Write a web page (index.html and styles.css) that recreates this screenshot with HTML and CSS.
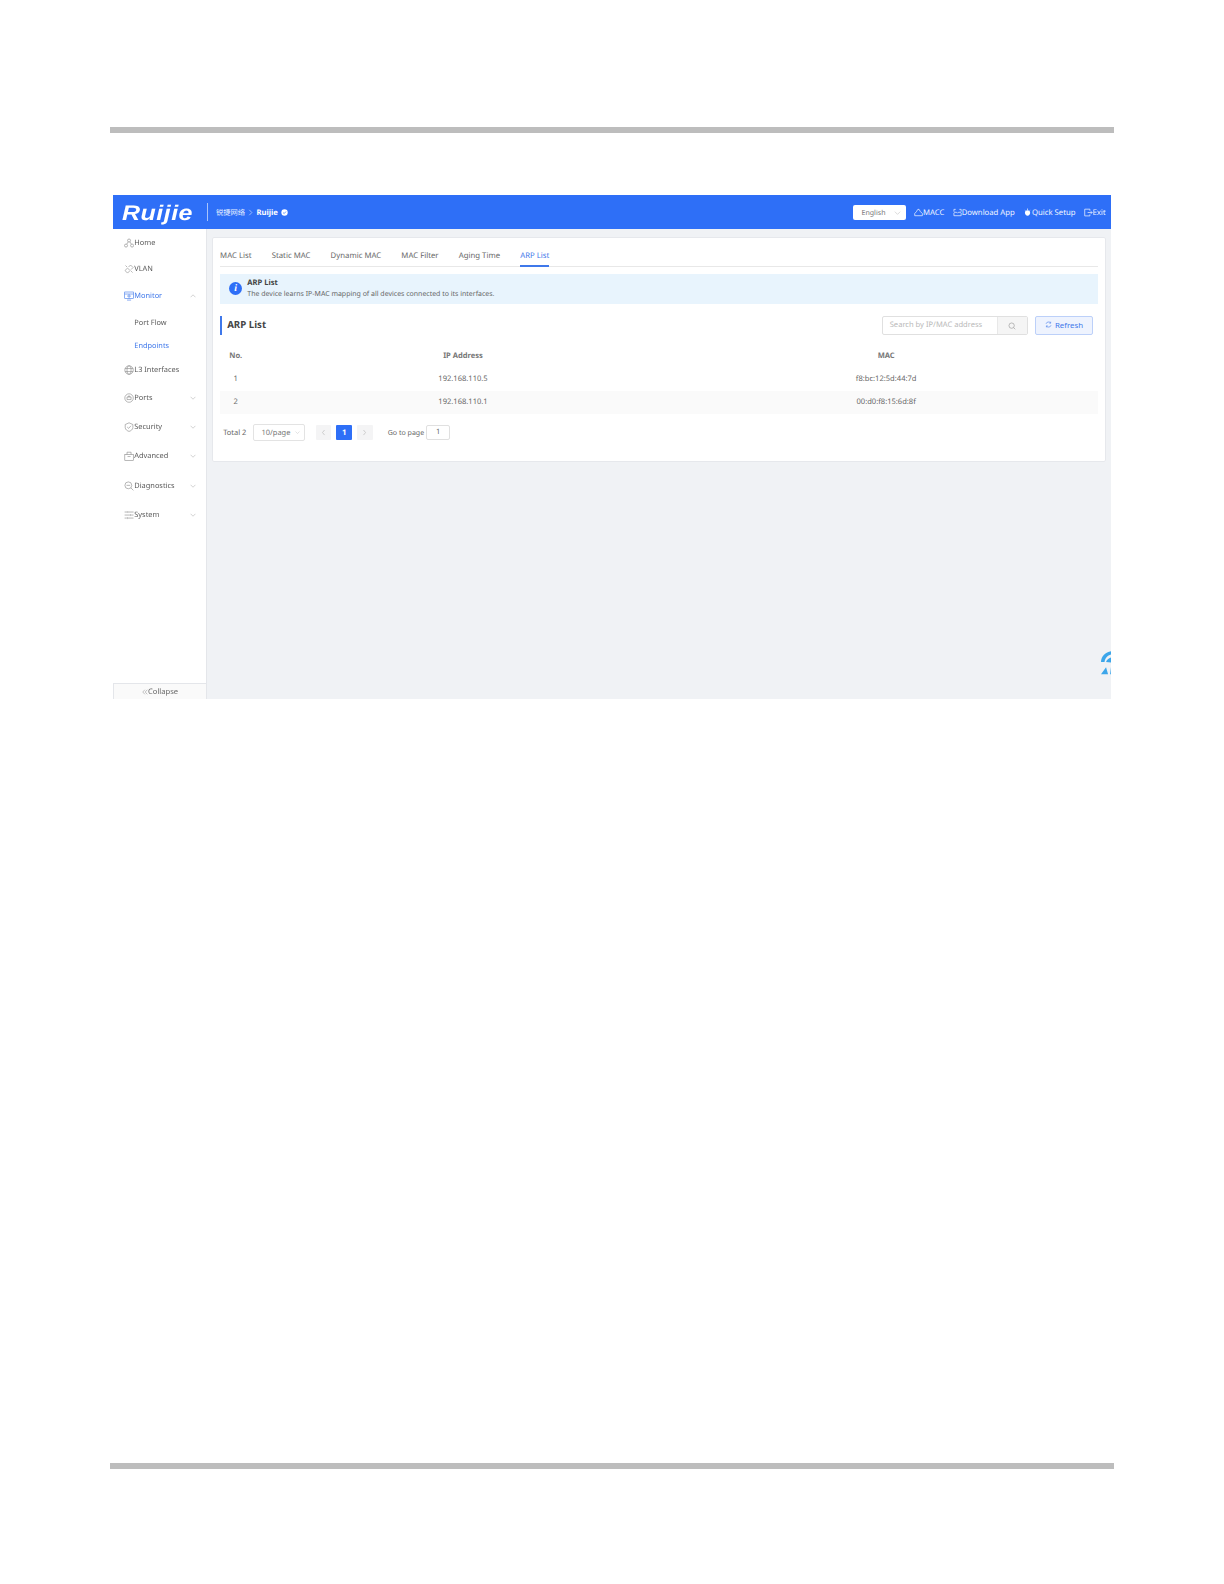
FILE: index.html
```html
<!DOCTYPE html>
<html lang="en">
<head>
<meta charset="utf-8">
<title>ARP List</title>
<link rel="stylesheet" href="styles.css">
</head>
<body>
<div class="page">
  <div class="rule"></div>
  <div class="app">
    <header class="topbar">
      <div class="logo">Ruijie</div>
      <div class="divider"></div>
      <div class="crumbs">
        <span class="crumb-cn">锐捷网络</span>
        <svg class="crumb-sep" viewBox="0 0 6 8"><path d="M1.500 .8 4.600 4 1.500 7.200"/></svg>
        <span class="crumb-name">Ruijie</span>
        <svg class="crumb-info" viewBox="0 0 8 8"><circle cx="4" cy="4" r="3.600"/><path d="M2.400 4.100 3.600 5.200 5.600 2.900"/></svg>
      </div>
      <div class="top-right">
        <div class="lang"><span>English</span><svg class="chev" viewBox="0 0 10 6"><path d="M1 1l4 4 4-4"/></svg></div>
        <a class="top-link link-macc"><svg viewBox="0 0 10 9"><path d="M.8 8h8.400V5.600L7 3.400 5.600 1H4.200L2.600 3.600.8 5.600z"/></svg>MACC</a>
        <a class="top-link link-app"><svg viewBox="0 0 10 9"><path d="M3 1H1v2.500M7 1h2v2.500M1 5v3h8V5M1 4.200h3l1 1 1-1h3"/></svg>Download App</a>
        <a class="top-link link-setup"><svg viewBox="0 0 10 10"><path d="M5 .6v1.600M2 2.600 3 3.400M8 2.600 7 3.400"/><path class="solid" d="M5 2.400c1.700 0 2.900 1.200 2.900 2.900S6.700 8.600 5 8.600 2.100 7 2.100 5.300 3.300 2.400 5 2.400z"/></svg>Quick Setup</a>
        <a class="top-link link-exit"><svg viewBox="0 0 10 9"><path d="M6.500 2.500V.8H.8v7.400h5.700V6.500M4 4.500h5M7.500 3l1.500 1.500L7.500 6"/></svg>Exit</a>
      </div>
    </header>
    <div class="workspace">
      <aside class="sidebar">
        <nav class="nav">
          <a class="nav-item"><svg class="nav-ico" viewBox="0 0 10 10"><circle cx="5" cy="2.500" r="1.500"/><circle cx="2" cy="7.500" r="1.500"/><circle cx="8" cy="7.500" r="1.500"/><path d="M4.200 3.800 2.800 6M5.800 3.800 7.200 6"/></svg>Home</a>
          <a class="nav-item"><svg class="nav-ico" viewBox="0 0 10 10"><path d="M1 6.500 3.500 4 6 6.500 3.500 9zM4.500 3 6.500 1 9 3.500 7 5.500"/><path d="M3 3 1.500 1.500M7 7l1.500 1.500"/></svg>VLAN</a>
          <a class="nav-item is-active"><svg class="nav-ico" viewBox="0 0 10 10"><rect x=".7" y="1" width="8.600" height="6.300"/><path d="M.7 3h8.600M5 3v4.300M3 9h4M3 5h4"/></svg>Monitor<svg class="chev nav-chev" viewBox="0 0 10 6"><path d="M1 5l4-4 4 4"/></svg></a>
          <a class="nav-item sub">Port Flow</a>
          <a class="nav-item sub is-active">Endpoints</a>
          <a class="nav-item"><svg class="nav-ico" viewBox="0 0 10 10"><circle cx="5" cy="5" r="4.200"/><ellipse cx="5" cy="5" rx="2" ry="4.200"/><path d="M1 3.500h8M1 6.500h8"/></svg>L3 Interfaces</a>
          <a class="nav-item"><svg class="nav-ico" viewBox="0 0 10 10"><circle cx="5" cy="5" r="4.200"/><path d="M3 4h4v2.500H3zM4.200 4V3h1.600v1"/></svg>Ports<svg class="chev nav-chev" viewBox="0 0 10 6"><path d="M1 1l4 4 4-4"/></svg></a>
          <a class="nav-item"><svg class="nav-ico" viewBox="0 0 10 10"><path d="M5 .8 8.800 2.500V5.500C8.800 7.500 6.500 9 5 9.300 3.500 9 1.200 7.500 1.200 5.500V2.500z"/><path d="M3.200 5 4.600 6.300 6.900 3.800"/></svg>Security<svg class="chev nav-chev" viewBox="0 0 10 6"><path d="M1 1l4 4 4-4"/></svg></a>
          <a class="nav-item"><svg class="nav-ico" viewBox="0 0 10 10"><rect x=".8" y="3.500" width="8.400" height="5.700"/><path d="M3 3.500V1.200h4v2.300M3.500 5.500h3"/></svg>Advanced<svg class="chev nav-chev" viewBox="0 0 10 6"><path d="M1 1l4 4 4-4"/></svg></a>
          <a class="nav-item"><svg class="nav-ico" viewBox="0 0 10 10"><circle cx="4.300" cy="4.300" r="3.400"/><path d="M6.800 6.800 9.300 9.300M2.500 4.300h3.600"/></svg>Diagnostics<svg class="chev nav-chev" viewBox="0 0 10 6"><path d="M1 1l4 4 4-4"/></svg></a>
          <a class="nav-item"><svg class="nav-ico" viewBox="0 0 10 10"><path d="M.6 2h2.500M4.500 2h5M.6 5h5M7 5h2.400M.6 8h2M4 8h5.400"/><path d="M3.800 1v2M6.300 4v2M3.300 7v2"/></svg>System<svg class="chev nav-chev" viewBox="0 0 10 6"><path d="M1 1l4 4 4-4"/></svg></a>
        </nav>
        <div class="collapse"><svg viewBox="0 0 8 8"><path d="M3.800 1 1 4l2.800 3M7 1 4.200 4 7 7"/></svg>Collapse</div>
      </aside>
      <main class="main">
        <section class="card">
          <div class="tabs">
            <a class="tab">MAC List</a>
            <a class="tab">Static MAC</a>
            <a class="tab">Dynamic MAC</a>
            <a class="tab">MAC Filter</a>
            <a class="tab">Aging Time</a>
            <a class="tab is-current">ARP List</a>
          </div>
          <div class="alert">
            <div class="alert-icon">i</div>
            <div class="alert-body">
              <div class="alert-title">ARP List</div>
              <div class="alert-text">The device learns IP-MAC mapping of all devices connected to its interfaces.</div>
            </div>
          </div>
          <div class="list-head">
            <h2 class="list-title">ARP List</h2>
            <div class="search">
              <span class="search-field">Search by IP/MAC address</span>
              <span class="search-btn"><svg viewBox="0 0 10 10"><circle cx="4.500" cy="4.500" r="3.300"/><path d="M7 7l2 2"/></svg></span>
            </div>
            <button class="refresh"><svg viewBox="0 0 10 10"><path d="M1.500 4A3.600 3.600 0 0 1 8 3M8.500 6A3.600 3.600 0 0 1 2 7M8 1v2H6M2 9V7h2"/></svg>Refresh</button>
          </div>
          <div class="table">
            <div class="row row-head"><span>No.</span><span>IP Address</span><span>MAC</span></div>
            <div class="row"><span>1</span><span>192.168.110.5</span><span>f8:bc:12:5d:44:7d</span></div>
            <div class="row row-alt"><span>2</span><span>192.168.110.1</span><span>00:d0:f8:15:6d:8f</span></div>
          </div>
          <div class="pager">
            <span class="total">Total 2</span>
            <div class="size"><span>10/page</span><svg class="chev" viewBox="0 0 10 6"><path d="M1 1l4 4 4-4"/></svg></div>
            <span class="pg pg-prev"><svg viewBox="0 0 6 8"><path d="M4.200 1 1.800 4l2.400 3"/></svg></span>
            <span class="pg pg-on">1</span>
            <span class="pg pg-next"><svg viewBox="0 0 6 8"><path d="M1.800 1l2.400 3-2.400 3"/></svg></span>
            <span class="goto">Go to page</span>
            <span class="goto-input">1</span>
          </div>
        </section>
        <svg class="float-mascot" viewBox="0 0 20 24"><path d="M0 11C0 4 6 0 12 0h8v3h-7C8 3 4 6 3.500 11zM5 11c1-3 4-5 8-5h7v4h-6c-2 0-3 .5-4 1.500zM0 23l5-7 2 7zM9 23l1-8 3-2v10z"/></svg>
      </main>
    </div>
  </div>
  <div class="rule rule-bottom"></div>
</div>
</body>
</html>
```

FILE: styles.css
```css
* { box-sizing: border-box; }
html, body { margin: 0; padding: 0; background: #fff; }
body { font-family: "Noto Sans", "Noto Sans CJK SC", sans-serif; font-size: 8px; color: #555; text-rendering: geometricPrecision; }
a { color: inherit; text-decoration: none; }
svg { display: block; fill: none; stroke: currentColor; stroke-width: .8; }

.page { zoom: 1.0099; width: 994px; margin-left: 109px; padding-top: 126px; }
.rule { height: 6px; background: #bdbdbd; }
.rule-bottom { margin-top: 757px; }

.app { width: 988px; height: 499px; margin: 61px 0 0 3px; display: flex; flex-direction: column; overflow: hidden; filter: blur(.45px); }

.topbar { height: 34px; flex: none; background: #2e6ff7; color: #fff; display: flex; align-items: center; padding-left: 9px; }
.logo { width: 70px; margin-top: 3px; font: italic 700 21px/1 "Liberation Sans", sans-serif; letter-spacing: .4px; transform: scaleX(1.18); transform-origin: left center; }
.divider { width: 1px; height: 17px; margin-left: 14px; background: #a9c4fb; }
.crumbs { display: flex; align-items: center; margin-left: 8px; padding-top: 1px; }
.crumb-cn { width: 29px; font-size: 7.200px; white-space: nowrap; color: #e6eeff; }
.crumb-sep { width: 5px; height: 7px; margin-left: 3px; color: #cfe0ff; }
.crumb-name { margin-left: 3px; font-weight: 700; font-size: 7.600px; }
.crumb-info { width: 7px; height: 7px; margin-left: 3px; }
.crumb-info circle { fill: #fff; stroke: none; }
.crumb-info path { stroke: #2e6ff7; }
.top-right { margin-left: auto; display: flex; align-items: center; padding-right: 5px; padding-top: 1px; }
.lang { width: 52px; height: 14px; background: #fff; border-radius: 2px; color: #777; display: flex; align-items: center; justify-content: space-between; padding: 0 5px 0 8px; font-size: 7px; }
.lang .chev { width: 7px; height: 4px; color: #bbb; }
.top-link { display: flex; align-items: center; white-space: nowrap; font-size: 7.650px; color: #f2f6ff; margin-left: 8px; }
.top-link svg { width: 9px; height: 9px; }
.top-link .solid { fill: #fff; stroke: none; }
.link-app, .link-setup, .link-exit { margin-left: 8px; }

.workspace { flex: 1; display: flex; min-height: 0; }
.sidebar { width: 93px; flex: none; background: #fff; border-right: 1px solid #e4e6ea; display: flex; flex-direction: column; }
.nav { flex: 1; display: grid; grid-template-rows: 26px 26px 28px 24px 22px 26px 29px 29px 29px 29px 29px 1fr; }
.nav-item { display: flex; align-items: center; padding: 1px 0 0 11px; font-size: 7.350px; color: #5a5a5a; white-space: nowrap; }
.nav-item.sub { padding-left: 21px; font-size: 7.300px; }
.nav-item.is-active { color: #3f78ea; }
.nav-ico { width: 10px; height: 10px; flex: none; stroke-width: .6; color: #888; }
.is-active .nav-ico { color: #3f78ea; }
.nav-chev { width: 6px; height: 4px; margin-left: auto; margin-right: 10px; color: #b5b5b5; stroke-width: 1; }
.collapse { height: 16px; flex: none; display: flex; align-items: center; justify-content: center; padding-top: 2px; background: #fafafa; border-top: 1px solid #e4e6ea; border-left: 1px solid #e4e6ea; font-size: 7.500px; color: #666; }
.collapse svg { width: 6px; height: 6px; color: #999; }

.main { flex: 1; position: relative; min-width: 0; background: #f0f2f5; padding: 8px 5px 0; overflow: hidden; }
.card { height: 223px; background: #fff; border: 1px solid #e6e8ec; border-radius: 2px; padding: 0 7px; }

.tabs { height: 28px; display: flex; gap: 20px; border-bottom: 1px solid #e8e8e8; }
.tab { height: 28px; display: flex; align-items: center; padding-top: 8px; font-size: 7.700px; color: #666; white-space: nowrap; }
.tab.is-current { color: #3f78ea; border-bottom: 2px solid #3f78ea; padding-top: 9px; }

.alert { height: 30px; margin-top: 7px; background: #e8f4fd; display: flex; align-items: center; padding-left: 9px; }
.alert-icon { width: 13px; height: 13px; flex: none; border-radius: 50%; background: #2e6ff7; color: #fff; font: italic 700 10px/13px "Liberation Serif", serif; text-align: center; }
.alert-body { margin-left: 5px; }
.alert-title { font-size: 7.500px; line-height: 11px; font-weight: 700; color: #444; }
.alert-text { font-size: 6.920px; line-height: 11px; color: #666; white-space: nowrap; }

.list-head { height: 19px; margin-top: 12px; display: flex; align-items: center; padding-right: 5px; }
.list-title { margin: 0; flex: 1; height: 19px; border-left: 2px solid #3f78ea; padding-left: 5px; font-size: 9.600px; line-height: 18px; font-weight: 700; color: #444; }
.search { width: 145px; height: 19px; display: flex; border: 1px solid #e0e0e0; border-radius: 2px; }
.search-field { flex: 1; padding-left: 7px; font-size: 7.500px; line-height: 17px; color: #b8b8b8; white-space: nowrap; }
.search-btn { width: 30px; background: #f5f5f5; border-left: 1px solid #e8e8e8; display: flex; align-items: center; justify-content: center; color: #999; }
.search-btn svg { width: 8px; height: 8px; }
.refresh { width: 57px; height: 19px; margin-left: 7px; padding: 0 0 2px; display: flex; align-items: center; justify-content: center; gap: 3px; font: 7.800px "Noto Sans", sans-serif; color: #3f78ea; background: #eef3fe; border: 1px solid #bcd0f9; border-radius: 2px; }
.refresh svg { width: 7px; height: 7px; }

.table { margin-top: 9px; font-size: 7.500px; }
.row { height: 23px; display: grid; grid-template-columns: 31px 1fr 1fr; align-items: center; text-align: center; color: #666; }
.row-head { height: 23px; font-weight: 700; color: #777; }
.row-alt { background: #fafafa; }

.pager { margin-top: 10px; padding-left: 3px; height: 17px; display: flex; align-items: center; font-size: 7.400px; color: #666; }
.total { width: 30px; white-space: nowrap; }
.size { width: 51px; height: 17px; border: 1px solid #e3e3e3; border-radius: 2px; display: flex; align-items: center; justify-content: space-between; padding: 0 4px 0 7px; color: #777; }
.size .chev { width: 5px; height: 3px; color: #bbb; }
.pg { width: 15px; height: 15px; display: flex; align-items: center; justify-content: center; border-radius: 1px; background: #f4f4f5; color: #bbb; }
.pg svg { width: 5px; height: 7px; }
.pg-prev { margin-left: 11px; }
.pg-on { width: 16px; margin: 0 5px; background: #2e6ff7; color: #fff; font-weight: 700; font-size: 7.800px; }
.goto { margin-left: 15px; width: 38px; white-space: nowrap; font-size: 7px; }
.goto-input { width: 24px; height: 15px; border: 1px solid #e0e0e0; border-radius: 2px; text-align: center; line-height: 13px; }

.float-mascot { position: absolute; right: -10px; top: 418px; width: 20px; height: 24px; fill: #3ca6ea; stroke: none; }
```
